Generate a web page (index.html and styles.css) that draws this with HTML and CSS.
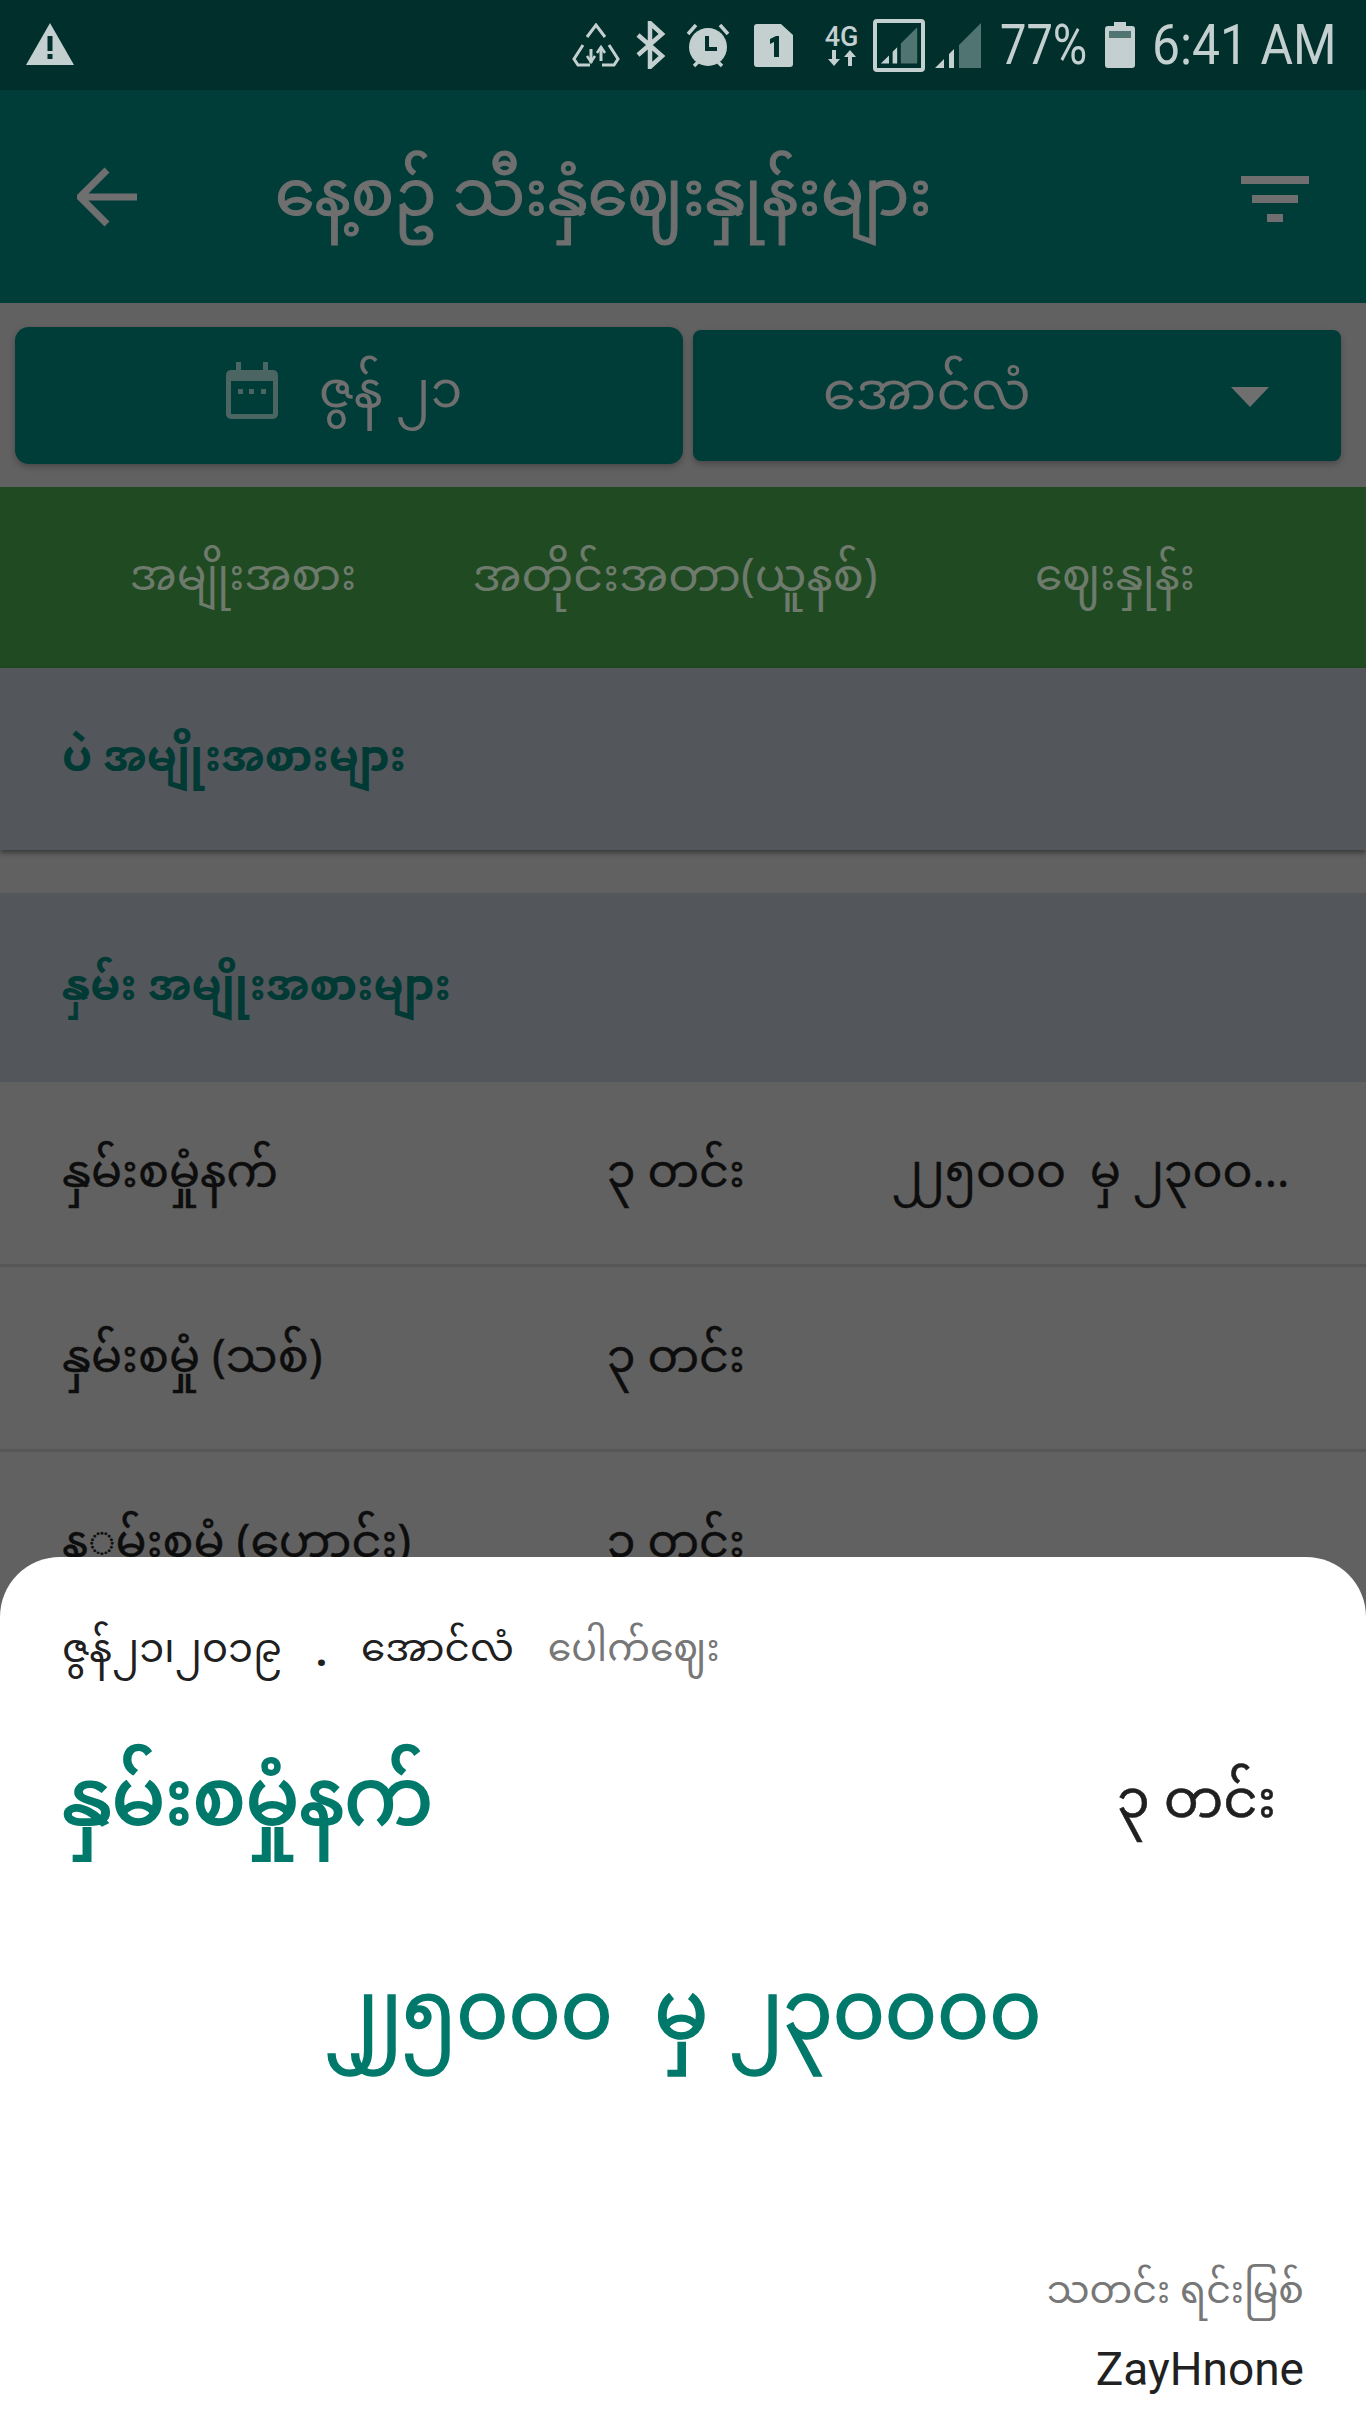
FILE: index.html
```html
<!DOCTYPE html>
<html lang="my">
<head>
  <meta charset="UTF-8">
  <title>နေ့စဉ် သီးနှံဈေးနှုန်းများ</title>
  <link rel="stylesheet" href="styles.css">
</head>
<body>
  <div class="screen">
    <div class="status-bar">
      <svg class="warn-icon" viewBox="0 0 48 42"><path d="M24 0 48 42H0Z" fill="#c3d0cf"/><path d="M21.500 13h5v15h-5zM21.500 31h5v5h-5z" fill="#012f2c"/></svg>
      <div class="status-right">
        <svg class="s-recycle" viewBox="0 0 48 44" fill="none" stroke="#c3d0cf" stroke-width="3"><path d="M15 14 24 2l9 12M11 22 2 36l4 6h12M37 22l9 14-4 6H30M19 26v14M29 24v14"/><path d="M15 33l4 6 4-6M25 30l4-6 4 6" stroke-width="2.500"/></svg>
        <svg class="s-bt" viewBox="0 0 31 48" fill="none" stroke="#c3d0cf" stroke-width="4.500"><path d="M3 14 27 35 15 46V2l12 11L3 34"/></svg>
        <svg class="s-alarm" viewBox="0 0 46 46"><circle cx="23" cy="25" r="19" fill="#c3d0cf"/><path d="M3 12 11 3M43 12 35 3M9 44l4-4M37 44l-4-4" stroke="#c3d0cf" stroke-width="3.500"/><path d="M22 14v13h10" fill="none" stroke="#012f2c" stroke-width="4"/></svg>
        <svg class="s-sim" viewBox="0 0 39 43"><path d="M3 0H27L39 11V40a3 3 0 0 1-3 3H3a3 3 0 0 1-3-3V3a3 3 0 0 1 3-3Z" fill="#c3d0cf"/><path d="M16 15l6-3h3v21h-5V18l-4 2Z" fill="#012f2c"/></svg>
        <div class="s-net">
          <span class="net-label">4G</span>
          <svg class="net-arrows" viewBox="0 0 34 16"><path d="M9 16 3 9h4V0h4v9h4ZM25 0l6 7h-4v9h-4V7h-4Z" fill="#c3d0cf"/></svg>
        </div>
        <div class="s-signal-box">
          <svg viewBox="0 0 44 44"><path d="M2 43 11 34V43ZM15 43V30l5-5V43Z" fill="#c3d0cf"/><path d="M24 43V21L42 3V43Z" fill="#4f7471"/></svg>
        </div>
        <svg class="s-signal" viewBox="0 0 46 45"><path d="M0 45 9 36V45ZM14 45V31l5-5V45Z" fill="#c3d0cf"/><path d="M24 45V22L46 0V45Z" fill="#4f7471"/></svg>
        <span class="s-pct">77%</span>
        <svg class="s-batt" viewBox="0 0 30 46"><path d="M9 0h12v4h6a3 3 0 0 1 3 3V43a3 3 0 0 1-3 3H3a3 3 0 0 1-3-3V7a3 3 0 0 1 3-3h6Z" fill="#c3d0cf"/><path d="M4 9H26V16H4Z" fill="#4f7471"/></svg>
        <span class="s-time">6:41 AM</span>
      </div>
    </div>

    <div class="toolbar">
      <svg class="back-icon" viewBox="0 0 60 60" fill="none" stroke="#6f6f6f" stroke-width="7"><path d="M60 30H5M30 3 3 30l27 27"/></svg>
      <h1 class="toolbar-title">နေ့စဥ် သီးနှံဈေးနှုန်းများ</h1>
      <svg class="filter-icon" viewBox="0 0 68 46"><path d="M0 0H68V8H0ZM11 19H57V27H11ZM26 38H42V46H26Z" fill="#6f6f6f"/></svg>
    </div>

    <div class="filters">
      <div class="filter-btn date-btn">
        <svg class="cal-icon" viewBox="0 0 52 57"><path d="M10 0h5v8h22V0h5v8h5a5 5 0 0 1 5 5V52a5 5 0 0 1-5 5H5a5 5 0 0 1-5-5V13a5 5 0 0 1 5-5h5Z" fill="#4a6562"/><path d="M5 19H47V52H5Z" fill="#003d38"/><path d="M12 27h5v5h-5zM23 27h5v5h-5zM35 27h5v5h-5z" fill="#4a6562"/></svg>
        <span>ဇွန် ၂၁</span>
      </div>
      <div class="filter-btn month-btn">
        <span class="month-name">အောင်လံ</span>
        <span class="caret"></span>
      </div>
    </div>

    <div class="table-head">
      <span>အမျိုးအစား</span>
      <span class="head-wide">အတိုင်းအတာ(ယူနစ်)</span>
      <span>ဈေးနှုန်း</span>
    </div>

    <div class="group group-first">ပဲ အမျိုးအစားများ</div>
    <div class="group group-second">နှမ်း အမျိုးအစားများ</div>

    <div class="row">
      <span>နှမ်းစမှုံနက်</span>
      <span>၃ တင်း</span>
      <span class="price"><span class="tight">၂</span>၂၅၀၀၀&nbsp; မှ ၂၃၀၀...</span>
    </div>
    <div class="row">
      <span>နှမ်းစမှုံ (သစ်)</span>
      <span>၃ တင်း</span>
      <span class="price"></span>
    </div>
    <div class="row">
      <span>န◌မ်းစမံ (ဟောင်း)</span>
      <span>၃ တင်း</span>
      <span class="price"></span>
    </div>

    <div class="sheet">
      <div class="sheet-meta">
        <span>ဇွန်၂၁၊၂၀၁၉</span>
        <span class="dot">.</span>
        <span class="meta-month">အောင်လံ</span>
        <span class="meta-grey">ပေါက်ဈေး</span>
      </div>
      <div class="sheet-title">
        <span class="sheet-name">နှမ်းစမှုံနက်</span>
        <span class="sheet-unit">၃ တင်း</span>
      </div>
      <div class="sheet-price"><span class="tight">၂</span>၂၅၀၀၀&nbsp; မှ ၂၃၀၀၀၀</div>
      <div class="sheet-source">
        <div class="source-label">သတင်း ရင်းမြစ်</div>
        <div class="source-name">ZayHnone</div>
      </div>
    </div>
  </div>
</body>
</html>
```

FILE: styles.css
```css
* {
  margin: 0;
  padding: 0;
  box-sizing: border-box;
}

body {
  font-family: "Noto Sans Myanmar", "Noto Sans", Roboto, sans-serif;
  background-color: #616161;
}

.screen {
  position: relative;
  width: 1366px;
  height: 2428px;
  overflow: hidden;
  background-color: #616161;
}

.tight { letter-spacing: -0.2em; }

/* status bar */
.status-bar {
  height: 90px;
  display: flex;
  align-items: center;
  justify-content: space-between;
  padding: 0 33px 0 26px;
  background-color: #012f2c;
}

.warn-icon {
  width: 48px;
  height: 42px;
  margin-top: -2px;
}

.status-right {
  display: flex;
  align-items: center;
  color: #c3d0cf;
  font-family: Roboto, sans-serif;
}

.s-recycle { width: 48px; height: 44px; margin-right: 15px; }
.s-bt { width: 31px; height: 48px; margin-right: 19px; }
.s-alarm { width: 46px; height: 46px; margin-right: 23px; }
.s-sim { width: 39px; height: 43px; margin-right: 31px; }

.s-net {
  width: 35px;
  margin-right: 14px;
  display: flex;
  flex-direction: column;
  align-items: center;
}

.net-label {
  font-size: 27px;
  line-height: 24px;
  font-weight: 500;
}

.net-arrows { width: 34px; height: 16px; margin-top: 1px; }

.s-signal-box {
  width: 52px;
  height: 53px;
  border: 4px solid #c3d0cf;
  border-radius: 4px;
  padding: 0 2px 2px;
  margin-right: 10px;
}

.s-signal-box svg { display: block; width: 40px; height: 43px; }
.s-signal { width: 46px; height: 45px; margin-right: 19px; }

.s-pct {
  width: 88px;
  margin-right: 17px;
  font-size: 56px;
  line-height: 60px;
  white-space: nowrap;
  transform: scaleX(0.84);
  transform-origin: left center;
}

.s-batt { width: 30px; height: 46px; margin-right: 17px; }

.s-time {
  width: 181px;
  font-size: 56px;
  line-height: 60px;
  white-space: nowrap;
  transform: scaleX(0.89);
  transform-origin: left center;
}

/* toolbar */
.toolbar {
  height: 213px;
  display: flex;
  align-items: center;
  padding: 0 57px 0 77px;
  background-color: #003d38;
  color: #6f6f6f;
}

.back-icon { width: 60px; height: 60px; flex-shrink: 0; }

.toolbar-title {
  flex: 1;
  margin-left: 138px;
  margin-top: 6px;
  font-size: 64px;
  font-weight: 400;
  white-space: nowrap;
  -webkit-text-stroke: 1px #6f6f6f;
}

.filter-icon { width: 68px; height: 46px; margin-top: 4px; }

/* date and month */
.filters {
  height: 184px;
  display: flex;
  align-items: center;
  gap: 10px;
  padding: 0 25px 0 15px;
}

.filter-btn {
  display: flex;
  align-items: center;
  background-color: #003d38;
  color: #6f6f6f;
  box-shadow: 0 3px 6px rgba(0, 0, 0, 0.25);
}

.date-btn {
  width: 668px;
  height: 137px;
  justify-content: center;
  gap: 41px;
  border-radius: 14px;
  padding-right: 10px;
  font-size: 51px;
}

.cal-icon { width: 52px; height: 57px; margin-top: -10px; }

.month-btn {
  position: relative;
  width: 648px;
  height: 131px;
  padding-left: 130px;
  border-radius: 8px;
  font-size: 53px;
}

.month-name { margin-top: 3px; }

.caret {
  position: absolute;
  left: 538px;
  top: 57px;
  border-left: 19px solid transparent;
  border-right: 19px solid transparent;
  border-top: 20px solid #6f6f6f;
}

/* table */
.table-head {
  height: 181px;
  display: grid;
  grid-template-columns: 486px 378px 502px;
  align-items: center;
  justify-items: center;
  padding-top: 5px;
  background-color: #204a21;
  color: #6d7a6c;
  font-size: 44px;
}

.head-wide { font-size: 46px; }

.group {
  display: flex;
  align-items: center;
  padding: 4px 0 0 62px;
  background-color: #53565a;
  color: #013a35;
  font-size: 43px;
  font-weight: 700;
}

.group-first {
  height: 182px;
  margin-bottom: 43px;
  box-shadow: 0 3px 5px rgba(0, 0, 0, 0.4);
}

.group-second { height: 189px; }

.row {
  height: 185px;
  display: grid;
  grid-template-columns: 545px 288px 1fr;
  align-items: center;
  padding: 7px 0 0 62px;
  border-bottom: 3px solid #565656;
  color: #0d0d0d;
  font-size: 46px;
  -webkit-text-stroke: 0.4px #0d0d0d;
}

.price {
  margin-left: -3px;
  white-space: nowrap;
}

/* bottom sheet */
.sheet {
  position: absolute;
  left: 0;
  right: 0;
  bottom: 0;
  height: 871px;
  padding: 0 62px;
  background-color: #fff;
  border-radius: 60px 60px 0 0;
  display: flex;
  flex-direction: column;
}

.sheet-meta {
  display: flex;
  align-items: center;
  gap: 34px;
  height: 70px;
  margin-top: 60px;
  color: #202020;
  font-size: 40px;
}

.meta-month { font-size: 39px; }
.meta-grey { color: #777; font-size: 38px; }
.dot { font-weight: 700; margin-top: 8px; }

.sheet-title {
  display: flex;
  align-items: center;
  justify-content: space-between;
  height: 120px;
  margin-top: 58px;
  padding-right: 28px;
}

.sheet-name {
  color: #00796b;
  font-size: 79px;
  -webkit-text-stroke: 2px #00796b;
}

.sheet-unit {
  color: #202020;
  font-size: 53px;
  -webkit-text-stroke: 0.5px #202020;
}

.sheet-price {
  margin-top: 67px;
  text-align: center;
  color: #00796b;
  font-size: 80px;
  white-space: nowrap;
  -webkit-text-stroke: 1.5px #00796b;
}

.sheet-price .tight { letter-spacing: -0.38em; }

.sheet-source {
  margin-top: auto;
  padding-bottom: 32px;
  text-align: right;
}

.source-label {
  color: #777;
  font-size: 38px;
}

.source-name {
  margin-top: 6px;
  color: #212121;
  font-family: Roboto, sans-serif;
  font-size: 46px;
}
```
